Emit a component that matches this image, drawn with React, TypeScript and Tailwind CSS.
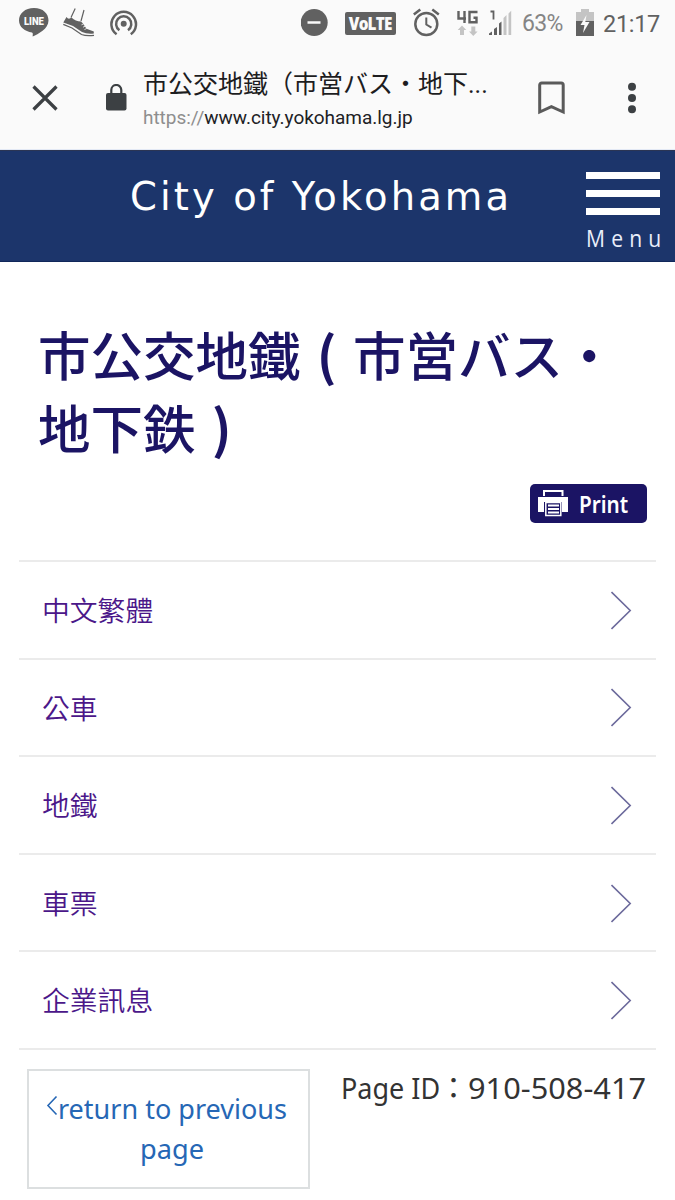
import React from "react";

const links = ["中文繁體", "公車", "地鐵", "車票", "企業訊息"];

const StatusBar = () => (
  <div className="flex h-[46px] items-center pl-[19px] font-['Roboto',sans-serif] text-[#616161]">
    <svg className="h-[46px] w-[30px] shrink-0" viewBox="19 0 30 46" fill="currentColor">
      <path d="M34 8C25 8 19 13.500 19 20.500C19 27 25 31.500 32 32.500C33.500 33 32.500 35 32.700 36.500C38 34 48.500 29 48.500 20.500C48.500 13.500 43 8 34 8Z" />
      <text x="33.900" y="24.800" textAnchor="middle" textLength="20" lengthAdjust="spacingAndGlyphs" fontSize="10" fontWeight="900" fill="#fafafa">
        LINE
      </text>
    </svg>
    <svg className="ml-3.5 h-[46px] w-8 shrink-0" viewBox="63 0 32 46">
      <path
        d="M66.500 17Q68.500 20 71.500 17.500Q75.500 21.500 81 21.500L83 23.500L86.500 28.800L93.800 31.500V33.500Q87 34.300 82 32L73 26L63.300 22.500Z"
        fill="currentColor"
      />
      <path d="M63.300 24.300L72 28L81.500 34.500Q86 36.300 94 35.400" fill="none" stroke="currentColor" strokeWidth="1.300" />
      <path d="M75.200 8.500L71 17.500M84 10L81 21" fill="none" stroke="currentColor" strokeWidth="1.200" />
      <path d="M81.500 24.800l2.200-1M83 27.200l2.200-1M84.500 29.500l2.200-1" fill="none" stroke="#fafafa" strokeWidth="0.800" />
    </svg>
    <svg className="ml-[15px] h-[46px] w-7 shrink-0" viewBox="110 0 28 46" fill="none" stroke="currentColor" strokeWidth="2.500">
      <circle cx="123.700" cy="23.800" r="3" fill="currentColor" stroke="none" />
      <path d="M119.400 30.200A7.600 7.600 0 1 1 128 30.200" />
      <path d="M116.600 34.200A12.300 12.300 0 1 1 130.800 34.200" />
    </svg>
    <svg className="ml-[163px] h-[46px] w-7 shrink-0" viewBox="301 0 28 46">
      <circle cx="314.200" cy="22.500" r="13.500" fill="currentColor" />
      <path d="M307.500 22.500h13" stroke="#fafafa" strokeWidth="2.500" />
    </svg>
    <div className="ml-4 flex h-[23px] w-[51px] shrink-0 items-center justify-center rounded-[2px] bg-[#616161] font-['Open_Sans',sans-serif] text-[18px] leading-[23px] font-extrabold tracking-[-0.9px] text-[#fafafa]">
      <span className="scale-x-85">VoLTE</span>
    </div>
    <svg className="ml-4 h-[46px] w-7 shrink-0" viewBox="412 0 28 46" fill="none" stroke="currentColor" strokeWidth="2.500">
      <circle cx="426.300" cy="24" r="11" />
      <path d="M413.800 14.500l6.500-5M438.800 14.500l-6.500-5" />
      <path d="M426.300 17.500v7l5.200 3.200" strokeWidth="2" />
    </svg>
    <svg className="ml-4 h-[46px] w-6 shrink-0" viewBox="456 0 24 46" fill="none" stroke="currentColor" strokeWidth="2.400">
      <path d="M458.500 11v7.500h7.500M464.500 11v12M477.500 12h-8v10.200h7v-4.500h-3" />
      <g fill="#c4c4c4" stroke="none">
        <path d="M462 25.500l4.300 4.500h-2.300v5h-4v-5h-2.300zM473.300 36l4.300-4.500h-2.300v-5h-4v5h-2.300z" />
      </g>
    </svg>
    <svg className="ml-2 h-[46px] w-6 shrink-0" viewBox="488 0 24 46">
      <path d="M489 35v-1.500l3-2V35zM494 35v-6l3-2V35zM499 35V23.500l2.500-2V35z" fill="currentColor" />
      <path d="M503.500 35V18l3-3V35zM508.500 35V13.500l2.700-2.700V35z" fill="#c4c4c4" />
      <path d="M490.500 11.500h3v8" fill="none" stroke="currentColor" strokeWidth="1.800" />
    </svg>
    <span className="ml-2.5 w-[42px] pt-0.5 whitespace-nowrap text-[23px] leading-[46px] tracking-[-0.7px] text-[#858585]">63%</span>
    <svg className="ml-3 h-[46px] w-[18px] shrink-0" viewBox="576 0 18 46">
      <path d="M576 22V12h5V9h8v3h5v10z" fill="#c4c4c4" />
      <path d="M576 21h18v15h-18z" fill="currentColor" />
      <path d="M586.500 15l-6 10h4l-1.500 8l6.500-11h-4.200z" fill="#fafafa" />
    </svg>
    <span className="ml-[9px] pt-px whitespace-nowrap text-[23.500px] leading-[46px] tracking-[-0.3px]">21:17</span>
  </div>
);

const BrowserBar = () => (
  <div className="flex h-[104px] items-center border-b border-[#e3e9f5] pl-8 text-[#3c4043]">
    <svg className="size-[26px]" viewBox="0 0 26 26" fill="none" stroke="currentColor" strokeWidth="3.200">
      <path d="M1.500 1.500l23 23M24.500 1.500l-23 23" />
    </svg>
    <svg className="ml-12 h-[27px] w-[21px]" viewBox="0 0 21 27">
      <rect x="0" y="9" width="20.500" height="17.500" rx="2" fill="currentColor" />
      <path d="M5.300 10V6a5 5 0 0 1 10 0V10" fill="none" stroke="currentColor" strokeWidth="2.200" />
    </svg>
    <div className="ml-4 w-[370px] pt-[5px] whitespace-nowrap">
      <div className="font-['Roboto','Noto_Sans_CJK_JP',sans-serif] text-[25px] leading-[36px] text-[#1d1d1f]">
        市公交地鐵（市営バス・地下...
      </div>
      <div className="font-['Roboto',sans-serif] text-[19px] leading-[30px] tracking-[-0.03px] text-[#202124]">
        <span className="text-[#8e8e8e]">https://</span>www.city.yokohama.lg.jp
      </div>
    </div>
    <svg className="ml-[25px] h-[34px] w-[27px]" viewBox="0 0 27 34" fill="none" stroke="#5a5a5a" strokeWidth="3">
      <path d="M1.700 31V4a2 2 0 0 1 2-2h19.500a2 2 0 0 1 2 2v27l-11.800-5.300z" />
    </svg>
    <svg className="ml-[63px] h-8 w-2" viewBox="0 0 8 32" fill="currentColor">
      <circle cx="4" cy="4.700" r="4" />
      <circle cx="4" cy="16" r="4" />
      <circle cx="4" cy="27.300" r="4" />
    </svg>
  </div>
);

const SiteHeader = () => (
  <header className="flex h-[112px] border-t border-b border-t-[#2b3554] border-b-[#10275a] bg-[#1c356b] pl-[130px] text-white">
    <div className="w-[456px] whitespace-nowrap pt-5 font-['DejaVu_Sans',sans-serif] text-[38.500px] leading-[52px] tracking-[3.100px]">
      City of Yokohama
    </div>
    <div className="flex w-[74px] flex-col pt-[21px]">
      <div className="h-[7px] bg-white" />
      <div className="mt-[11px] h-[7px] bg-white" />
      <div className="mt-[11px] h-[7px] bg-white" />
      <div className="mt-[6px] origin-left scale-x-88 whitespace-nowrap font-['Open_Sans',sans-serif] text-[24px] leading-[34px] tracking-[7px] text-[#e9eefa]">
        Menu
      </div>
    </div>
  </header>
);

// full-width cell with the bracket in the middle
const Paren = ({ children }: { children: string }) => (
  <span className="inline-block w-[1em] text-center font-bold">{children}</span>
);

const PrintButton = () => (
  <button className="flex h-[39px] w-[117px] items-center rounded-[5px] bg-[#1b1464] pl-2 font-['Noto_Sans',sans-serif] text-[23px] leading-[39px] font-semibold text-white">
    <svg className="h-[27px] w-[30px]" viewBox="0 0 30 27" fill="none" stroke="white">
      <path d="M0 7h30v15h-6V12H6v10H0z" fill="white" stroke="none" />
      <path d="M6 6V1h18.500v5" strokeWidth="2" />
      <path d="M7.800 12.500h15v13h-15z" fill="#1b1464" strokeWidth="1.500" />
      <path d="M10 15.500h11M10 19h11M10 22.500h11" strokeWidth="1.800" />
    </svg>
    <span className="ml-[11px] origin-left scale-x-90 pt-0.5">Print</span>
  </button>
);

export default function App() {
  return (
    <div className="h-[1200px] w-[675px] overflow-hidden bg-white">
      <div className="bg-[#fafafa]">
        <StatusBar />
        <BrowserBar />
      </div>
      <SiteHeader />
      <main>
        <h1 className="ml-[38px] pt-[55px] font-['Noto_Sans_CJK_JP',sans-serif] text-[52.500px] leading-[73px] font-medium whitespace-nowrap text-[#1b1464]">
          市公交地鐵<Paren>(</Paren>市営バス・
          <br />
          地下鉄<Paren>)</Paren>
        </h1>
        <div className="mt-[21px] flex justify-end pr-7">
          <PrintButton />
        </div>
        <ul className="mx-[19px] mt-[37px] border-t-2 border-[#ebebeb] font-['Noto_Sans_CJK_TC',sans-serif] text-[27.800px] font-[350] text-[#4b1789]">
          {links.map((label) => (
            <li key={label} className="flex h-[97.600px] items-center justify-between border-b-2 border-[#ebebeb] pr-6 pl-[23px]">
              <a>{label}</a>
              <svg className="h-10 w-[21px]" viewBox="0 0 21 40" fill="none" stroke="#6c6a9c" strokeWidth="1.600">
                <path d="M0.500 2l18.700 18.500L0.500 39" />
              </svg>
            </li>
          ))}
        </ul>
        <div className="flex items-start pt-[19px] pl-[27px] font-['Noto_Sans','Noto_Sans_CJK_JP',sans-serif]">
          <a className="flex h-[120px] w-[283px] flex-col items-center border-2 border-[#dcdfe0] pt-[17px] text-[28px] leading-[40px] text-[#2667b5]">
            <span className="flex w-[246px] whitespace-nowrap">
              <svg className="mt-[7px] h-[21px] w-3 shrink-0" viewBox="0 0 12 21" fill="none" stroke="currentColor" strokeWidth="1.600">
                <path d="M10.500 1.500L2 10.500l8.500 9" />
              </svg>
              <span className="origin-left scale-x-[.965]">return to previous</span>
            </span>
            <span className="ml-1.5 scale-x-[.97]">page</span>
          </a>
          <p className="ml-[31px] -mt-px flex text-[29px] leading-[40px] whitespace-nowrap text-[#333]">
            <span className="w-[98px] origin-left scale-x-[.93]">Page ID</span>
            <span className="w-[29px] text-center">：</span>
            <span className="origin-left scale-x-[1.06]">910-508-417</span>
          </p>
        </div>
      </main>
    </div>
  );
}
